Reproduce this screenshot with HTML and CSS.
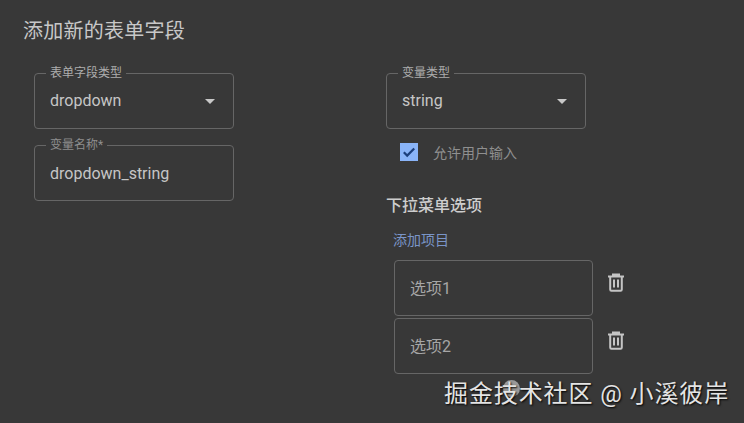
FILE: index.html
```html
<!DOCTYPE html>
<html lang="zh-CN">
<head>
  <meta charset="UTF-8">
  <title>添加新的表单字段</title>
  <link rel="stylesheet" href="styles.css">
</head>
<body>
  <h2 class="page-title">添加新的表单字段</h2>

  <main class="form-grid">
    <section class="col-left">
      <div class="field">
        <label>表单字段类型</label>
        <span class="value">dropdown</span>
        <span class="arrow"></span>
      </div>
      <div class="field field-name">
        <label class="dim">变量名称*</label>
        <span class="value">dropdown_string</span>
      </div>
    </section>

    <section class="col-right">
      <div class="field">
        <label>变量类型</label>
        <span class="value">string</span>
        <span class="arrow"></span>
      </div>

      <div class="check-row">
        <span class="checkbox">
          <svg width="14" height="14" viewBox="0 0 14 14"><path d="M1.8 7.2l3.4 3.4 7-7.2" fill="none" stroke="#1c3f7c" stroke-width="2.2"/></svg>
        </span>
        <span class="check-label">允许用户输入</span>
      </div>

      <h3 class="sub-title">下拉菜单选项</h3>
      <div class="add-link">添加项目</div>

      <div class="option-row">
        <div class="option">选项1</div>
        <svg class="trash" width="18" height="19" viewBox="0 0 18 19"><path d="M1 3.5h16M6 3.5V1.5h6v2M3.2 3.5v13a1.2 1.2 0 0 0 1.2 1.2h9.2a1.2 1.2 0 0 0 1.2-1.2v-13M7 6.5v8M11 6.5v8" fill="none" stroke="#c4c4c4" stroke-width="2"/></svg>
      </div>
      <div class="option-row">
        <div class="option">选项2</div>
        <svg class="trash" width="18" height="19" viewBox="0 0 18 19"><path d="M1 3.5h16M6 3.5V1.5h6v2M3.2 3.5v13a1.2 1.2 0 0 0 1.2 1.2h9.2a1.2 1.2 0 0 0 1.2-1.2v-13M7 6.5v8M11 6.5v8" fill="none" stroke="#c4c4c4" stroke-width="2"/></svg>
      </div>
    </section>
  </main>

  <div class="ghost-dot"></div>
  <div class="watermark">掘金技术社区 @ 小溪彼岸</div>
</body>
</html>
```

FILE: styles.css
```css
html, body {
  height: 100%;
}

body {
  margin: 0;
  background-color: #383838;
  color: #c6c6c6;
  font-family: Roboto, "Noto Sans CJK SC", sans-serif;
  overflow: hidden;
  position: relative;
}

.page-title {
  margin: 0;
  padding: 18px 0 0 23px;
  font-size: 20px;
  line-height: 26px;
  letter-spacing: 0.25px;
  font-weight: 400;
  color: #c8c8c8;
}

.form-grid {
  display: grid;
  grid-template-columns: 200px 200px;
  column-gap: 152px;
  padding: 29px 0 0 34px;
}

/* outlined field with the label sitting on the border */
.field {
  box-sizing: border-box;
  position: relative;
  width: 200px;
  height: 56px;
  padding: 0 16px 0 15px;
  border: 1px solid #666;
  border-radius: 4px;
  display: flex;
  align-items: center;
  justify-content: space-between;
}

.field label {
  position: absolute;
  left: 11px;
  top: -9px;
  padding: 0 4px;
  background-color: #383838;
  font-size: 12px;
  line-height: 16px;
  color: #adadad;
}

.field label.dim {
  color: #8e8e8e;
}

.value {
  font-size: 16px;
  line-height: 20px;
  color: #c6c6c6;
}

.field-name .value {
  margin-top: 1px;
}

.arrow {
  width: 0;
  height: 0;
  margin-right: 2px;
  border-left: 5px solid transparent;
  border-right: 5px solid transparent;
  border-top: 5px solid #c8c8c8;
}

.field-name {
  margin-top: 16px;
}

.check-row {
  display: flex;
  align-items: center;
  margin: 13px 0 0 14px;
  height: 20px;
}

.checkbox {
  width: 18px;
  height: 18px;
  background-color: #8ab4f8;
  display: flex;
  align-items: center;
  justify-content: center;
}

.check-label {
  margin-left: 15px;
  font-size: 14px;
  color: #8f8f8f;
}

.sub-title {
  margin: 34px 0 0;
  font-size: 16px;
  line-height: 20px;
  font-weight: 500;
  color: #cdcdcd;
}

.add-link {
  margin: 15px 0 0 7px;
  font-size: 14px;
  line-height: 19px;
  color: #7a95c8;
}

.option-row {
  display: flex;
  align-items: flex-start;
  margin: 2px 0 0 8px;
}

.add-link + .option-row {
  margin-top: 10px;
}

.option {
  box-sizing: border-box;
  flex: none;
  width: 199px;
  height: 56px;
  padding: 0 0 2px 15px;
  border: 1px solid #666;
  border-radius: 4px;
  display: flex;
  align-items: center;
  font-size: 16px;
  color: #a6a6a6;
}

.trash {
  flex: none;
  margin: 13px 0 0 14px;
}

/* avatar of the fainter watermark burnt in under the main one */
.ghost-dot {
  position: absolute;
  left: 503px;
  top: 380px;
  width: 17px;
  height: 17px;
  border-radius: 50%;
  background-color: #999;
}

.watermark {
  position: absolute;
  left: 444px;
  top: 379px;
  font-size: 24px;
  line-height: 30px;
  letter-spacing: 0.9px;
  color: #e4e4e4;
  text-shadow: 1px 1px 2px #000;
  white-space: nowrap;
}
```
